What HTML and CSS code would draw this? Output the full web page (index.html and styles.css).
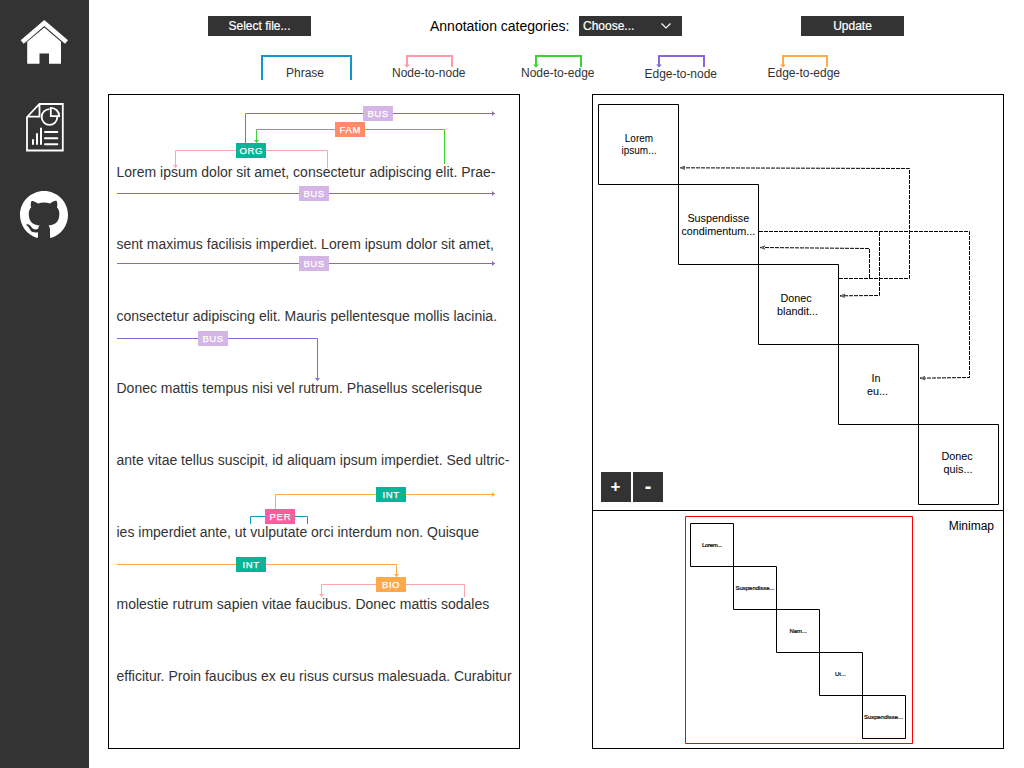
FILE: index.html
```html
<!DOCTYPE html>
<html lang="en">
<head>
<meta charset="utf-8">
<title>Annotation viewer</title>
<link rel="stylesheet" href="styles.css">
</head>
<body>
<nav class="sidebar">
  <a class="nav-link" aria-label="Home"><svg width="48" height="48" viewBox="0 0 48 48"><path fill="#fff" d="M24.300 0 48 20.200 45 23.700 24.300 6 3.700 23.700 .7 20.200ZM24.300 7.500 41 21.800V43.800H29V33.500H19.500V43.800H7.200V21.800Z"/></svg></a>
  <a class="nav-link report" aria-label="Report"><svg width="38" height="49" viewBox="0 0 38 49"><g fill="none" stroke="#fff" stroke-width="1.800"><path d="M1 14 13.500 1H36.800V47.500H1ZM1.500 13.700H13.500V1.500"/><path d="M23.500 6.200A7.800 7.800 0 1 0 31.300 14"/><path d="M24.800 4.800V13.200H33.200A8.400 8.400 0 0 0 24.800 4.800Z"/><path stroke-width="2" stroke-linecap="round" d="M7 37V41M11 31V41M15 25.500V41M19 29H31.300M19 35.200H31.300M19 41.200H31.300"/></g></svg></a>
  <a class="nav-link" aria-label="GitHub"><svg width="48" height="48" viewBox="0 0 16 16"><path fill="#fff" d="M8 0C3.58 0 0 3.58 0 8c0 3.54 2.29 6.53 5.47 7.59.4.07.55-.17.55-.38 0-.19-.01-.82-.01-1.49-2.01.37-2.53-.49-2.69-.94-.09-.23-.48-.94-.82-1.13-.28-.15-.68-.52-.01-.53.63-.01 1.08.58 1.23.82.72 1.21 1.87.87 2.33.66.07-.52.28-.87.51-1.07-1.78-.2-3.64-.89-3.64-3.95 0-.87.31-1.59.82-2.15-.08-.2-.36-1.02.08-2.12 0 0 .67-.21 2.2.82.64-.18 1.32-.27 2-.27s1.36.09 2 .27c1.53-1.04 2.2-.82 2.2-.82.44 1.1.16 1.92.08 2.12.51.56.82 1.27.82 2.15 0 3.07-1.87 3.75-3.65 3.95.29.25.54.73.54 1.48 0 1.07-.01 1.93-.01 2.2 0 .21.15.46.55.38A8.01 8.01 0 0 0 16 8c0-4.42-3.58-8-8-8Z"/></svg></a>
</nav>
<main class="main">
  <header class="toolbar">
    <button class="button">Select file...</button>
    <div class="category">
      <label class="category-label">Annotation categories:</label>
      <button class="button choose">Choose...<svg width="12" height="8" viewBox="0 0 12 8"><path d="M1.5 1.5 6 6 10.5 1.5" fill="none" stroke="#fff" stroke-width="1.2"/></svg></button>
    </div>
    <button class="button">Update</button>
  </header>
  <div class="legend">
    <svg class="legend-item phrase" width="91" height="25"><path d="M1 25V1H90V25" stroke="#0d98cb"/><text x="25" y="22" textLength="38">Phrase</text></svg>
    <svg class="legend-item pink-item" width="74" height="28"><path d="M15 12V1H60V12" stroke="#ff9ba8"/><path class="tip" d="M12 9.5H18L15 12.5Z"/><text x="0" y="22" textLength="73.5">Node-to-node</text></svg>
    <svg class="legend-item green-item" width="74" height="28"><path d="M15 12V1H60V12" stroke="#3ad430"/><path class="tip" d="M12 9.5H18L15 12.5Z"/><text x="0" y="22" textLength="73.5">Node-to-edge</text></svg>
    <svg class="legend-item purple-item" width="74" height="28"><path d="M15 12V1H60V12" stroke="#8868d5"/><path class="tip" d="M12 9.5H18L15 12.5Z"/><text x="0.500" y="23" textLength="72.5">Edge-to-node</text></svg>
    <svg class="legend-item orange-item" width="74" height="28"><path d="M16 12V1H60V12" stroke="#ffa94a"/><path class="tip" d="M13 9.5H19L16 12.5Z"/><text x="0.500" y="22" textLength="72.5">Edge-to-edge</text></svg>
  </div>
  <div class="panels">
    <section class="document">
      <p class="line">Lorem ipsum dolor sit amet, consectetur adipiscing elit. Prae-</p>
      <p class="line">sent maximus facilisis imperdiet. Lorem ipsum dolor sit amet,</p>
      <p class="line">consectetur adipiscing elit. Mauris pellentesque mollis lacinia.</p>
      <p class="line">Donec mattis tempus nisi vel rutrum. Phasellus scelerisque</p>
      <p class="line">ante vitae tellus suscipit, id aliquam ipsum imperdiet. Sed ultric-</p>
      <p class="line">ies imperdiet ante, ut vulputate orci interdum non. Quisque</p>
      <p class="line">molestie rutrum sapien vitae faucibus. Donec mattis sodales</p>
      <p class="line">efficitur. Proin faucibus ex eu risus cursus malesuada. Curabitur</p>
      <svg class="annotations" viewBox="109 95 410 653" width="410" height="653">
        <defs>
          <marker id="tip-purple" markerUnits="userSpaceOnUse" markerWidth="4" markerHeight="5" refX="2.5" refY="2.5" orient="auto"><path d="M0 0 3 2.5 0 5Z" fill="#8868d5"/></marker>
          <marker id="tip-green" markerUnits="userSpaceOnUse" markerWidth="4" markerHeight="5" refX="2.5" refY="2.5" orient="auto"><path d="M0 0 3 2.5 0 5Z" fill="#3ad430"/></marker>
          <marker id="tip-pink" markerUnits="userSpaceOnUse" markerWidth="4" markerHeight="5" refX="2.5" refY="2.5" orient="auto"><path d="M0 0 3 2.5 0 5Z" fill="#ffa5af"/></marker>
          <marker id="tip-orange" markerUnits="userSpaceOnUse" markerWidth="4" markerHeight="5" refX="2.5" refY="2.5" orient="auto"><path d="M0 0 3 2.5 0 5Z" fill="#ffa94a"/></marker>
        </defs>
        <g class="edge purple">
          <path d="M245.500 143V113.500H494.500"/><path d="M117 193.500H494.500"/><path d="M117 263.500H494.500"/><path d="M117 338.500H317.500V380.500"/>
        </g>
        <g class="edge green"><path d="M444.500 164V129.500H256.500V142.500"/></g>
        <g class="edge pink"><path d="M327.500 168V150.500H175.500V167.500"/><path d="M464.500 597V584.500H321.500V596.500"/></g>
        <g class="edge orange"><path d="M275.500 510V494.500H494.500"/><path d="M117 564.500H396.500V576.500"/></g>
        <path class="edge blue" d="M250.500 524V516.500H307.500V524"/>
        <path fill="#d3b5e6" d="M363 106h30v15h-30zM299 186h30v15h-30zM299 256h30v15h-30zM198 331h30v15h-30z"/>
        <path fill="#ff8c69" d="M335 122h30v15h-30z"/>
        <path fill="#05b597" d="M236 143h30v15h-30zM376 487h30v15h-30zM236 557h30v15h-30z"/>
        <path fill="#ff5c9e" d="M265 509h30v15h-30z"/>
        <path fill="#ffa94a" d="M376 577h30v15h-30z"/>
        <g class="tag">
          <text x="367.500" y="117" textLength="20.500">BUS</text><text x="339.500" y="133" textLength="21">FAM</text><text x="239.500" y="154" textLength="23">ORG</text>
          <text x="303.500" y="197" textLength="20.500">BUS</text><text x="303.500" y="267" textLength="20.500">BUS</text><text x="202.500" y="342" textLength="20.500">BUS</text>
          <text x="382.500" y="498" textLength="16.500">INT</text><text x="269.500" y="520" textLength="21">PER</text><text x="242.500" y="568" textLength="16.500">INT</text><text x="382" y="588" textLength="17.500">BIO</text>
        </g>
      </svg>
    </section>
    <section class="overview">
      <div class="graph">
        <svg viewBox="593 95 410 415" width="410" height="415">
          <defs><marker id="tip-black" markerUnits="userSpaceOnUse" markerWidth="7" markerHeight="5" refX="5" refY="2.500" orient="auto"><path d="M0 .8 5 2.500 0 4.200 1.500 2.500Z" fill="#aaa" stroke="#222" stroke-width=".6"/></marker></defs>
          <path class="block" d="M598.500 104.500h80v80h-80zM678.500 184.500h80v80h-80zM758.500 264.500h80v80h-80zM838.500 344.500h80v80h-80zM918.500 424.500h80v80h-80z"/>
          <g class="link">
            <path d="M839 278.500H909.500V168.500L680 167.800"/>
            <path d="M869.500 278V248.500L760 247.500"/>
            <path d="M759 231.500H969.500V377.500L920 378.200"/>
            <path d="M879.500 232V295.500L840 295.800"/>
          </g>
          <g class="block-label">
            <text class="small" x="639" y="142">Lorem</text><text class="small" x="639" y="153.500">ipsum...</text>
            <text x="718.300" y="222">Suspendisse</text><text x="718.300" y="235">condimentum...</text>
            <text x="796" y="302">Donec</text><text x="797.500" y="315">blandit...</text>
            <text x="876" y="382">In</text><text x="877.500" y="395">eu...</text>
            <text x="957" y="460">Donec</text><text x="958" y="473">quis...</text>
          </g>
        </svg>
        <div class="zoom"><button class="zoom-button">+</button><button class="zoom-button out">-</button></div>
      </div>
      <div class="minimap">
        <svg viewBox="593 511 410 237" width="410" height="237">
          <path class="viewport" d="M685.500 516.500h227v227h-227z"/>
          <path class="block" d="M690.500 523.500h43v43h-43zM733.500 566.500h43v43h-43zM776.500 609.500h43v43h-43zM819.500 652.500h43v43h-43zM862.500 695.500h43v43h-43z"/>
          <g class="mini-label">
            <text x="702" y="547" textLength="20">Lorem...</text><text x="735.500" y="590" textLength="39">Suspendisse...</text><text x="789.500" y="633" textLength="17.500">Nam...</text><text x="835" y="676" textLength="11">Ut...</text><text x="864" y="719" textLength="39">Suspendisse...</text>
          </g>
        </svg>
        <span class="minimap-title">Minimap</span>
      </div>
    </section>
  </div>
</main>
</body>
</html>
```

FILE: styles.css
```css
* { box-sizing: border-box; }
body { margin: 0; width: 1024px; height: 768px; display: flex; overflow: hidden; background: #fff; color: #000; font-family: "Liberation Sans", Arial, sans-serif; }
svg { display: block; }
.sidebar { width: 89px; background: #333; display: flex; flex-direction: column; align-items: center; padding: 20px 1px 0 0; gap: 35px; flex: none; }
.nav-link { display: block; }
.nav-link.report { margin: 0 0 4px 1px; }
.main { flex: 1; display: flex; flex-direction: column; }
.toolbar { display: flex; justify-content: space-between; height: 55px; padding: 16px 120px 0 119px; }
.button { width: 103px; height: 20px; padding: 0; border: 0; background: #333; color: #fff; font: 12px/20px "Liberation Sans", Arial, sans-serif; -webkit-text-stroke: 0.2px #fff; }
.category { display: flex; gap: 9px; height: 20px; }
.category-label { font-size: 14px; line-height: 20px; width: 140px; white-space: nowrap; }
.choose { display: flex; justify-content: space-between; align-items: center; padding: 0 10px 0 4px; }
.legend { display: flex; height: 39px; padding-left: 172px; }
.legend-item { margin-right: 49px; overflow: visible; flex: none; }
.legend-item.phrase { margin-right: 40px; }
.legend-item.pink-item { margin-right: 55px; }
.legend-item path { fill: none; stroke-width: 2; }
.legend-item .tip { stroke: none; }
.pink-item .tip { fill: #ff9ba8; }
.green-item .tip { fill: #3ad430; }
.purple-item .tip { fill: #8868d5; }
.orange-item .tip { fill: #ffa94a; }
.legend-item text { font-size: 12px; fill: #333; }
.panels { display: flex; justify-content: space-between; height: 655px; padding: 0 20px 0 19px; }
.document { position: relative; width: 412px; border: 1px solid #000; padding: 41px 0 0 7.5px; }
.line { margin: 0; height: 72px; line-height: 72px; font-size: 14px; color: #333; white-space: nowrap; }
.annotations { position: absolute; left: 0; top: 0; }
.edge { fill: none; stroke-width: 1; }
.purple { stroke: #8868d5; }
.purple path { marker-end: url(#tip-purple); }
.green { stroke: #3ad430; }
.green path { marker-end: url(#tip-green); }
.pink { stroke: #ffa5af; }
.pink path { marker-end: url(#tip-pink); }
.orange { stroke: #ffa94a; }
.orange path { marker-end: url(#tip-orange); }
.blue { stroke: #0d98cb; }
.edge marker path { stroke: none; }
.tag text { font-size: 9.5px; fill: #fff; stroke: #fff; stroke-width: 0.25px; }
.overview { width: 412px; border: 1px solid #000; }
.graph { position: relative; height: 416px; border-bottom: 1px solid #000; }
.block { fill: none; stroke: #000; }
.link { fill: none; stroke: #000; stroke-dasharray: 4 1; }
.link path { marker-end: url(#tip-black); }
.block-label text { font-size: 10.8px; text-anchor: middle; }
.block-label .small { font-size: 10px; }
.zoom { position: absolute; left: 8px; bottom: 8px; display: flex; gap: 2px; }
.zoom-button { width: 30px; height: 30px; border: 0; padding: 0 1px 0 0; background: #333; color: #fff; font: bold 17px "Liberation Sans", Arial, sans-serif; }
.zoom-button.out { padding: 0 0 2px; font-size: 20px; }
.minimap { position: relative; }
.viewport { fill: none; stroke: #f00; }
.mini-label text { font-size: 6px; stroke: #000; stroke-width: 0.2px; }
.minimap-title { position: absolute; right: 9px; top: 7px; font-size: 12px; line-height: 16px; }
```
